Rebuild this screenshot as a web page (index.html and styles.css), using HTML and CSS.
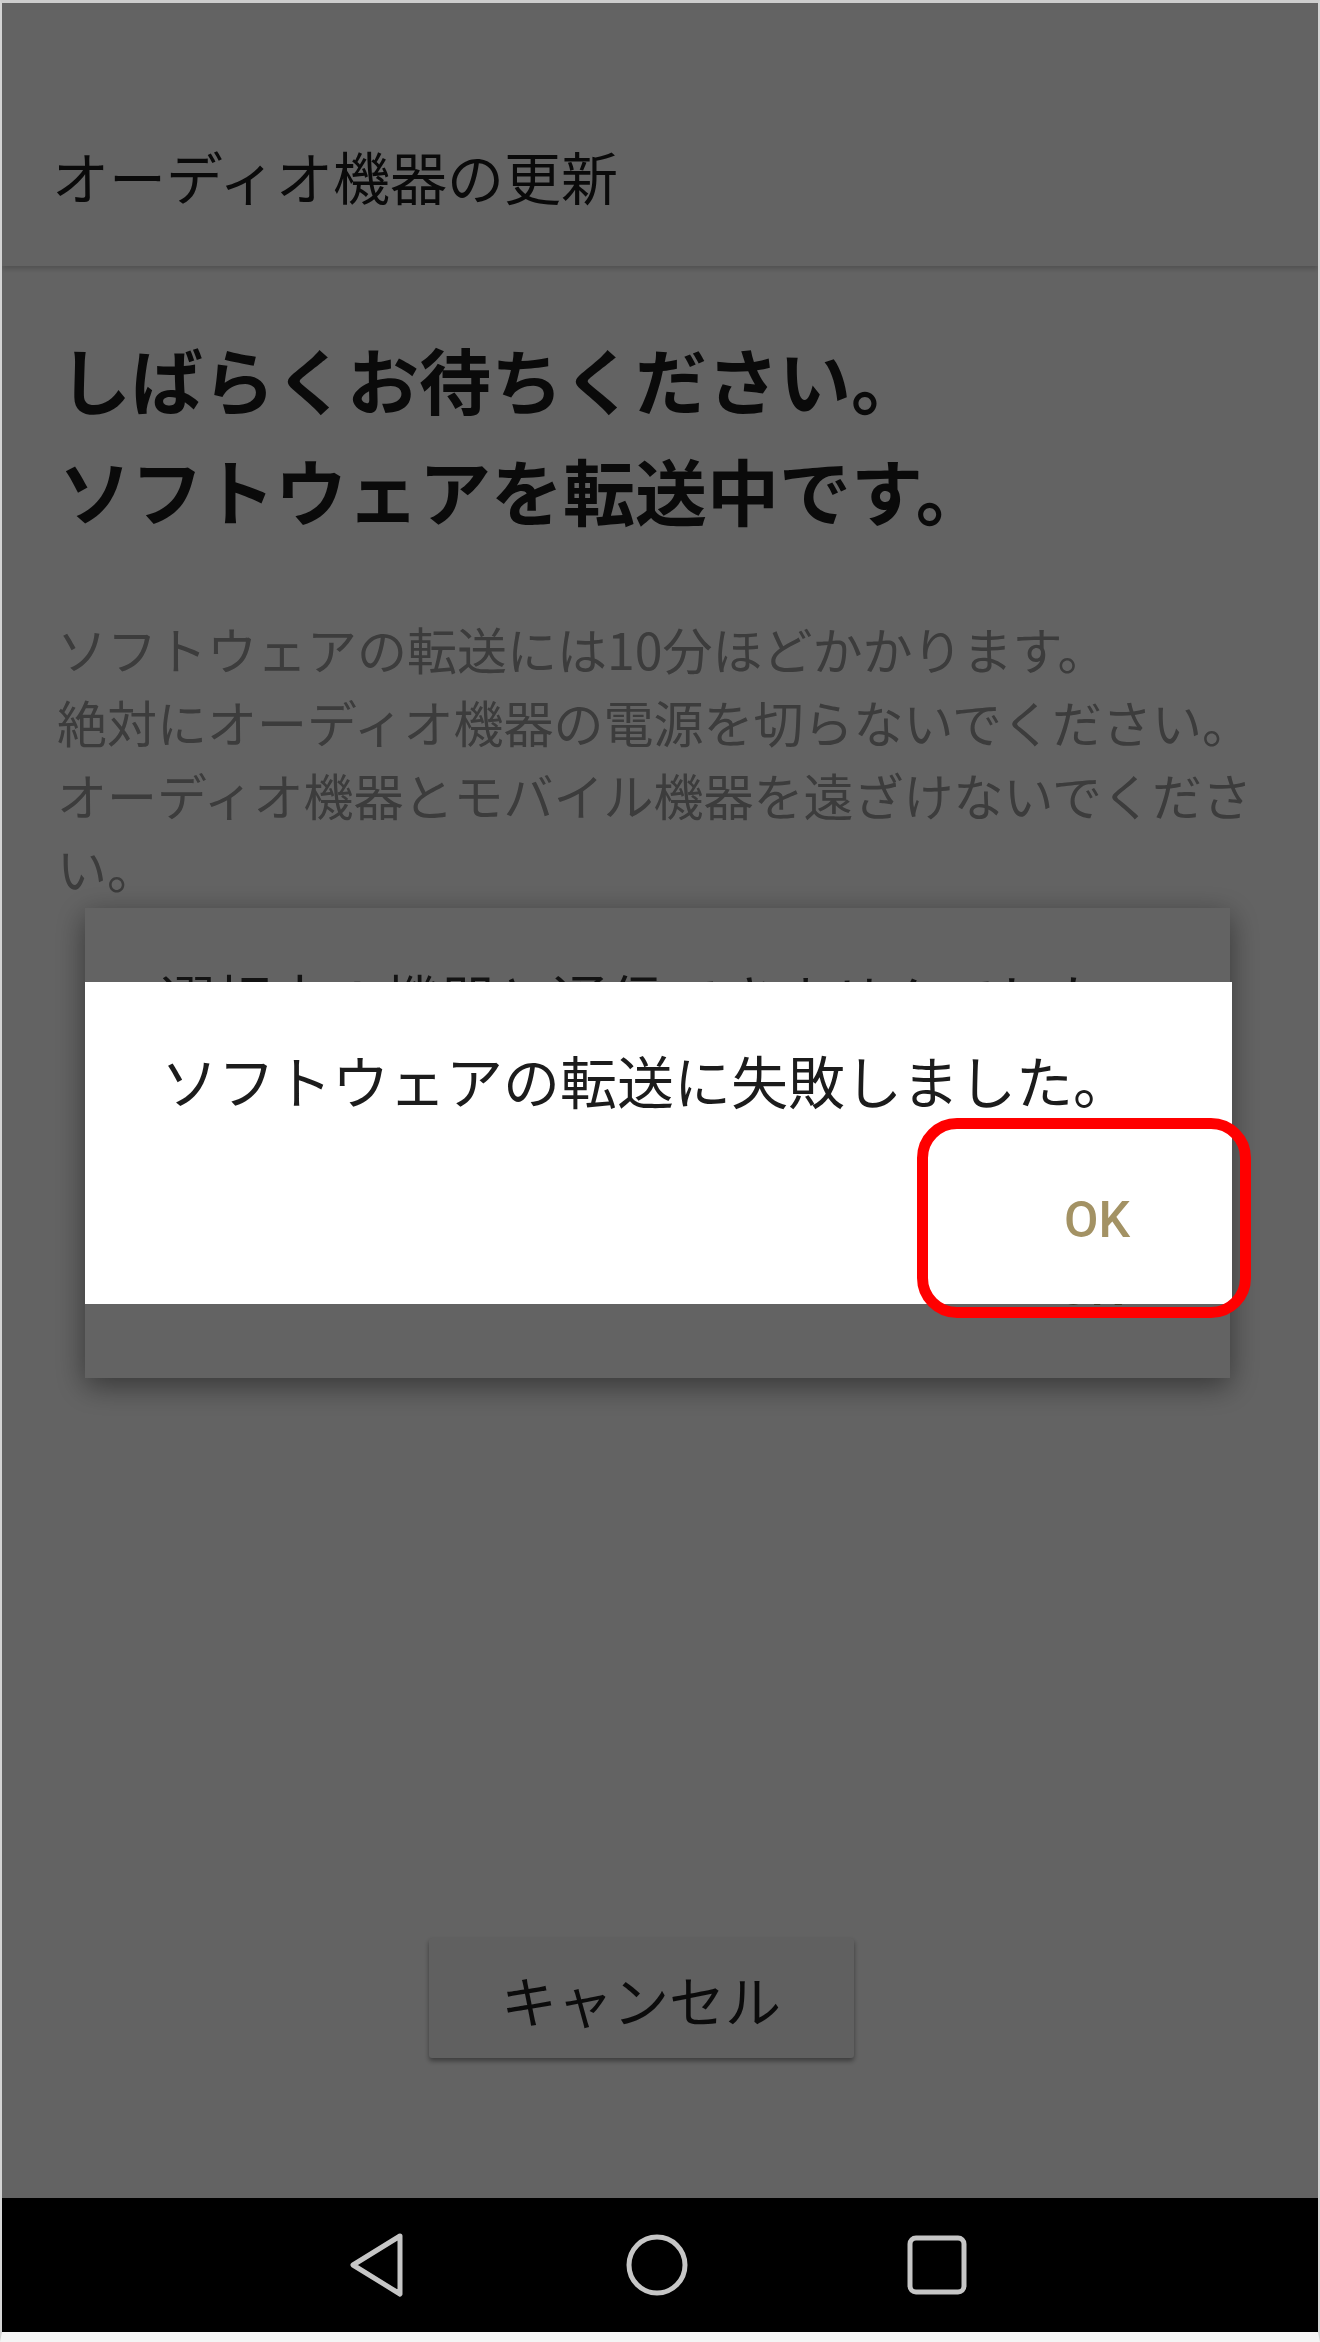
FILE: index.html
```html
<!DOCTYPE html>
<html lang="ja">
<head>
    <meta charset="utf-8">
    <meta name="viewport" content="width=device-width, user-scalable=no">
    <title>オーディオ機器の更新</title>
    <link rel="stylesheet" href="styles.css">
</head>
<body>
    <div id="device">
        <div id="screen">
            <div id="toolbar">
                <div id="toolbar-title">オーディオ機器の更新</div>
            </div>

            <div id="content">
                <h1 id="headline">しばらくお待ちください。<br>ソフトウェアを転送中です。</h1>
                <p id="notice">ソフトウェアの転送には10分ほどかかります。<br>絶対にオーディオ機器の電源を切らないでください。<br>オーディオ機器とモバイル機器を遠ざけないでください。</p>
            </div>

            <div id="cancel-row">
                <button id="cancel">キャンセル</button>
            </div>

            <!-- earlier dialog still sitting under the alert -->
            <div id="back-dialog">
                <div class="back-message">選択中の機器と通信できませんでした</div>
                <div class="back-actions"><span class="btn-text">OK</span></div>
            </div>

            <div id="scrim"></div>

            <div id="alert">
                <div class="alert-message">ソフトウェアの転送に失敗しました。</div>
                <div class="alert-actions">
                    <button class="btn-text">OK</button>
                </div>
            </div>

            <div id="highlight"></div>
        </div>

        <div id="navbar">
            <div class="nav-key">
                <svg width="58" height="66" viewBox="0 0 58 66">
                    <polygon points="52,4 5,33 52,62" fill="none" stroke="#c6c6c6" stroke-width="5" stroke-linejoin="round"/>
                </svg>
            </div>
            <div class="nav-key">
                <svg width="64" height="64" viewBox="0 0 64 64">
                    <circle cx="32" cy="32" r="28" fill="none" stroke="#c6c6c6" stroke-width="5"/>
                </svg>
            </div>
            <div class="nav-key">
                <svg width="60" height="60" viewBox="0 0 60 60">
                    <rect x="3" y="3" width="54" height="54" rx="6" fill="none" stroke="#c6c6c6" stroke-width="5"/>
                </svg>
            </div>
        </div>
    </div>
</body>
</html>
```

FILE: styles.css
```css
body {
    margin: 0;
    padding: 0;
    background-color: #ffffff;
    font-family: "Noto Sans CJK JP", "Noto Sans", sans-serif;
    color: #212121;
}

#device {
    width: 1320px;
    height: 2342px;
    box-sizing: border-box;
    border-style: solid;
    border-width: 3px 2px 10px 2px;
    border-color: #cdcdcd #d4d4d4 #f4f4f4 #d4d4d4;
    display: flex;
    flex-direction: column;
}

#screen {
    flex: 1;
    position: relative;
    display: flex;
    flex-direction: column;
    background-color: #ffffff;
    overflow: hidden;
}

/* app bar */
#toolbar {
    height: 263px;
    flex: none;
    box-sizing: border-box;
    padding: 144px 0 0 50px;
    background-color: #ffffff;
    box-shadow: 0 3px 5px rgba(0, 0, 0, 0.18);
    position: relative;
}

#toolbar-title {
    font-size: 57px;
    line-height: 56px;
    color: #1a1a1a;
}

#content {
    padding: 0 58px 0 55px;
}

#headline {
    margin: 56px 0 0 2px;
    font-size: 72px;
    line-height: 111px;
    font-weight: 700;
    color: #1a1a1a;
}

#notice {
    margin: 68px 0 0 0;
    font-size: 50px;
    line-height: 73px;
    color: #9a9a9a;
}

#cancel-row {
    margin-top: auto;
    margin-bottom: 140px;
    display: flex;
    justify-content: center;
    padding-right: 38px;
}

#cancel {
    width: 425px;
    height: 120px;
    border: none;
    border-radius: 3px;
    background-color: #f6f6f6;
    box-shadow: 0 3px 5px rgba(0, 0, 0, 0.4);
    font-family: "Noto Sans CJK JP", sans-serif;
    font-size: 56px;
    color: #1e1e1e;
    padding: 0;
}

/* dialogs */
#back-dialog {
    position: absolute;
    left: 83px;
    top: 905px;
    width: 1145px;
    height: 470px;
    box-sizing: border-box;
    padding: 62px 0 0 75px;
    background-color: #ffffff;
    box-shadow: 0 8px 28px rgba(0, 0, 0, 0.45);
    z-index: 1;
}

.back-message {
    font-size: 56px;
    line-height: 56px;
    color: #333333;
}

.back-actions {
    margin-top: 236px;
    padding-right: 108px;
    text-align: right;
}

#scrim {
    position: absolute;
    left: 0;
    top: 0;
    right: 0;
    bottom: 0;
    background-color: rgba(0, 0, 0, 0.61);
    z-index: 2;
}

#alert {
    position: absolute;
    left: 83px;
    top: 979px;
    width: 1147px;
    height: 322px;
    box-sizing: border-box;
    padding: 69px 0 0 76px;
    background-color: #ffffff;
    z-index: 3;
}

.alert-message {
    font-size: 57px;
    line-height: 56px;
    color: #1c1c1c;
}

.alert-actions {
    margin-top: 87px;
    display: flex;
    justify-content: flex-end;
    padding-right: 102px;
}

.btn-text {
    font-family: Roboto, "Noto Sans", sans-serif;
    font-weight: 500;
    font-size: 50px;
    line-height: 52px;
    color: #a39264;
    background: none;
    border: none;
    padding: 0;
}

/* red marker round the OK button */
#highlight {
    position: absolute;
    left: 915px;
    top: 1115px;
    width: 334px;
    height: 200px;
    box-sizing: border-box;
    border: 11px solid #ff0000;
    border-radius: 40px;
    z-index: 4;
}

/* system navigation */
#navbar {
    height: 134px;
    flex: none;
    background-color: #000000;
    display: flex;
    align-items: center;
    justify-content: center;
    gap: 180px;
    padding-right: 6px;
}

.nav-key {
    width: 100px;
    display: flex;
    justify-content: center;
}

.nav-key svg {
    display: block;
}
```
